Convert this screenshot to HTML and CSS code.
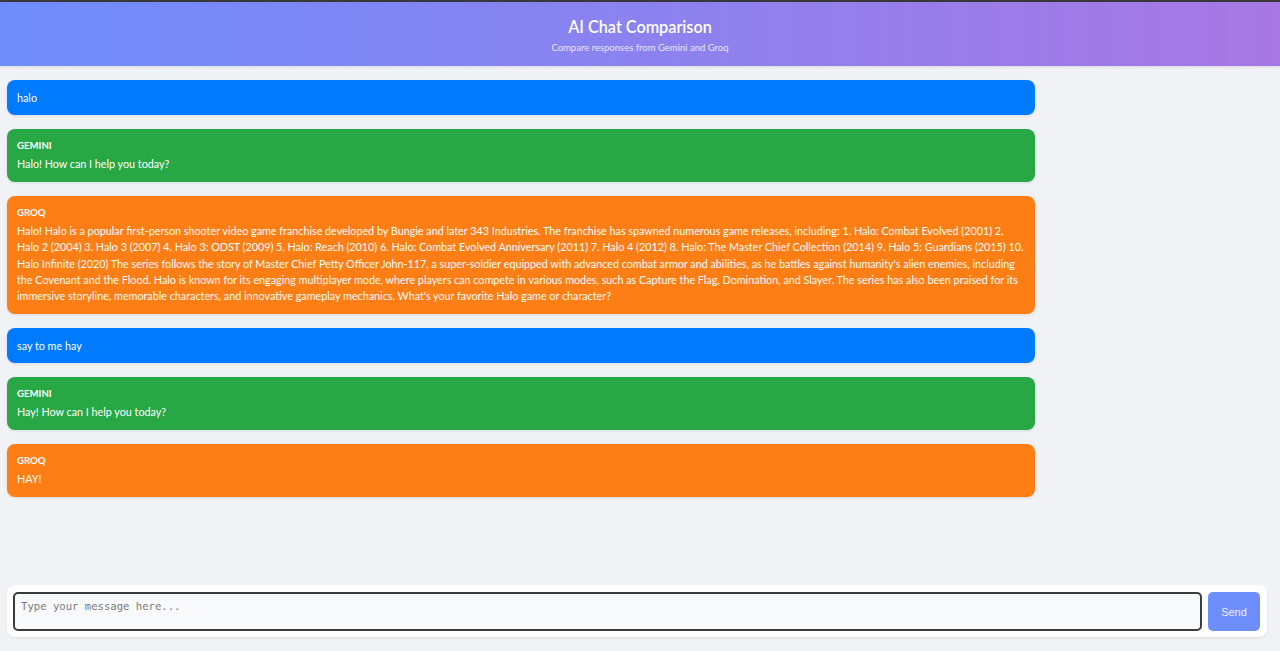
FILE: index.html
```html
<!DOCTYPE html>
<html lang="en">
<head>
<meta charset="utf-8">
<title>AI Chat Comparison</title>
<link rel="stylesheet" href="styles.css">
</head>
<body>
<div class="topline"></div>
<header class="header">
  <h1 class="title">AI Chat Comparison</h1>
  <p class="subtitle">Compare responses from Gemini and Groq</p>
</header>
<main class="chat">
  <div class="msg user">halo</div>
  <div class="msg gemini">
    <div class="label">GEMINI</div>
    <div class="text">Halo! How can I help you today?</div>
  </div>
  <div class="msg groq">
    <div class="label">GROQ</div>
    <div class="text">Halo! Halo is a popular first-person shooter video game franchise developed by Bungie and later 343 Industries. The franchise has spawned numerous game releases, including: 1. Halo: Combat Evolved (2001) 2. Halo 2 (2004) 3. Halo 3 (2007) 4. Halo 3: ODST (2009) 5. Halo: Reach (2010) 6. Halo: Combat Evolved Anniversary (2011) 7. Halo 4 (2012) 8. Halo: The Master Chief Collection (2014) 9. Halo 5: Guardians (2015) 10. Halo Infinite (2020) The series follows the story of Master Chief Petty Officer John-117, a super-soldier equipped with advanced combat armor and abilities, as he battles against humanity's alien enemies, including the Covenant and the Flood. Halo is known for its engaging multiplayer mode, where players can compete in various modes, such as Capture the Flag, Domination, and Slayer. The series has also been praised for its immersive storyline, memorable characters, and innovative gameplay mechanics. What's your favorite Halo game or character?</div>
  </div>
  <div class="msg user">say to me hay</div>
  <div class="msg gemini">
    <div class="label">GEMINI</div>
    <div class="text">Hay! How can I help you today?</div>
  </div>
  <div class="msg groq">
    <div class="label">GROQ</div>
    <div class="text">HAY!</div>
  </div>
</main>
<form class="composer">
  <textarea class="input" placeholder="Type your message here..." autofocus></textarea>
  <button type="button" class="send">Send</button>
</form>
</body>
</html>
```
FILE: styles.css
```css
* { box-sizing: border-box; }
html, body { margin: 0; height: 651px; overflow: hidden; }
body {
  background: #f0f2f5;
  font-family: Lato, "Open Sans", sans-serif;
  display: flex;
  flex-direction: column;
}
.topline { height: 2px; background: #3a3a3a; flex: none; }
.header {
  flex: none;
  height: 64px;
  background: linear-gradient(90deg, #6f8dfb 0%, #a777e3 100%);
  color: #fff;
  text-align: center;
  box-shadow: 0 1px 3px rgba(0,0,0,0.12);
  padding-top: 15px;
}
.title {
  margin: 0;
  font-size: 16.2px;
  line-height: 20px;
  font-weight: 600;
}
.subtitle {
  margin: 5px 0 0;
  font-size: 9.5px;
  line-height: 12px;
  opacity: 0.8;
}
.chat {
  flex: 1;
  min-height: 0;
  padding: 14px 7px;
  display: flex;
  flex-direction: column;
  gap: 14px;
}
.msg {
  width: 1028px;
  border-radius: 8px;
  color: #fff;
  padding: 9.5px 10px;
  font-size: 10.78px;
  line-height: 16.3px;
  box-shadow: 0 1px 3px rgba(0,0,0,0.1);
}
.user { background: #007bff; }
.gemini { background: #28a745; }
.groq { background: #fd7e14; }
.label {
  font-weight: 700;
  font-size: 9.6px;
  line-height: 14px;
  margin-bottom: 3.5px;
}
.composer {
  flex: none;
  margin: 0 13px 14px 7px;
  background: #fff;
  border-radius: 8px;
  padding: 7px 7px 6px 6px;
  display: flex;
  gap: 6px;
  box-shadow: 0 1px 3px rgba(0,0,0,0.08);
}
.input {
  flex: 1;
  height: 39px;
  resize: none;
  border: 2px solid #3c3c3c;
  border-radius: 5px;
  background: #f8f9fa;
  padding: 5px 6px;
  font-family: "DejaVu Sans Mono", monospace;
  font-size: 10.6px;
  line-height: 14px;
  outline: none;
}
.input::placeholder { color: #7a7a7a; }
.send {
  width: 52px;
  height: 39px;
  border: none;
  border-radius: 5px;
  background: #6e8efb;
  color: #eef1ff;
  font-family: "Liberation Sans", Arial, sans-serif;
  font-size: 11px;
}
```
